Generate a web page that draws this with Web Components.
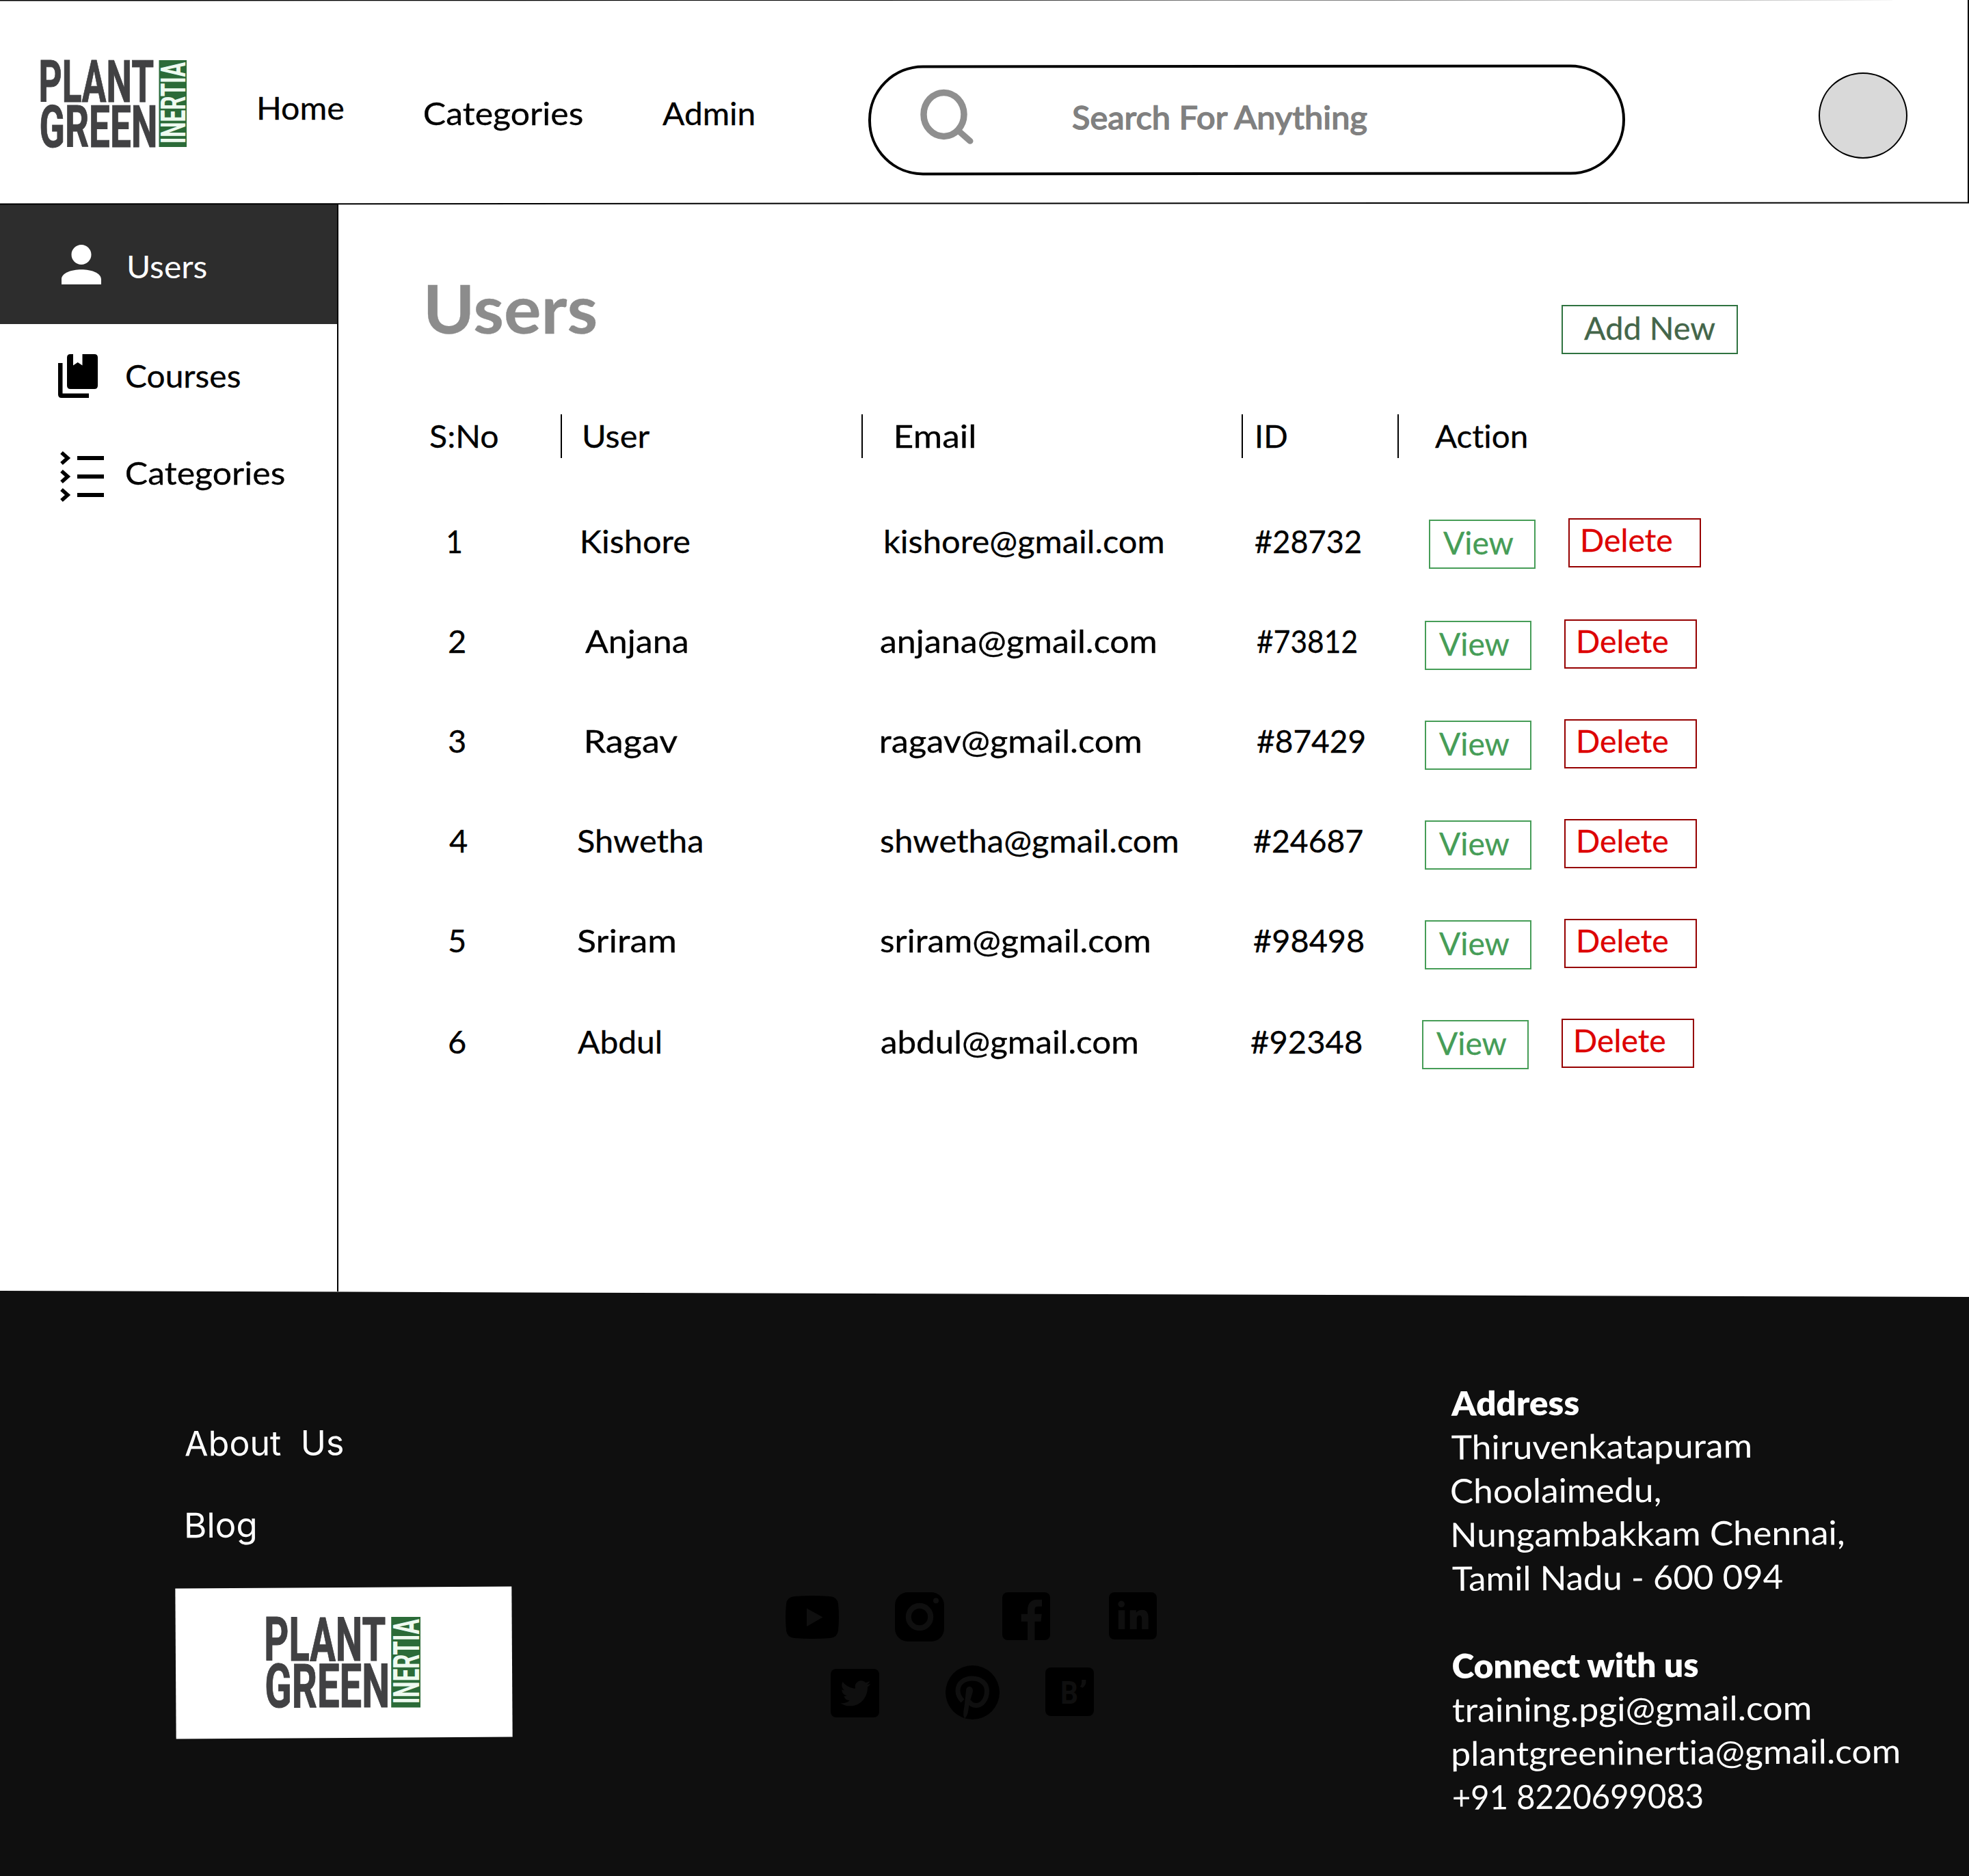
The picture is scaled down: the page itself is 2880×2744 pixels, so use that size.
<!DOCTYPE html>
<html lang="en">
<head>
<meta charset="utf-8">
<title>Plant Green Inertia – Users</title>
<style>
  html, body { margin: 0; padding: 0; background: #fff; }
  body { width: 2880px; height: 2744px; overflow: hidden; font-family: Lato, "Open Sans", sans-serif; color: #000; }
</style>
</head>
<body>
<admin-page></admin-page>
<script>
const define = (name, html, setup) => {
  const tpl = document.createElement('template');
  tpl.innerHTML = html;
  customElements.define(name, class extends HTMLElement {
    connectedCallback() {
      if (this.shadowRoot) return;
      const root = this.attachShadow({ mode: 'open' });
      root.append(tpl.content.cloneNode(true));
      if (setup) setup(this, root);
    }
  });
};

/* One line of text whose ink starts at the left edge of its box and spans the "w" attribute. */
const ctx = document.createElement('canvas').getContext('2d');
ctx.letterSpacing = '0.01px';
customElements.define('fit-text', class extends HTMLElement {
  connectedCallback() {
    if (this.shadowRoot) return;
    const root = this.attachShadow({ mode: 'open' });
    const size = +(this.getAttribute('size') || 47);
    const lh = +(this.getAttribute('lh') || 60);
    const weight = this.getAttribute('weight') || 400;
    const family = this.getAttribute('family') || 'Lato';
    const text = this.getAttribute('text');
    ctx.font = `${weight} ${size}px ${family}`;
    const m = ctx.measureText(text);
    const ink = m.actualBoundingBoxLeft + m.actualBoundingBoxRight;
    const w = +(this.getAttribute('w') || ink);
    root.innerHTML = `<style>
      :host { display: block; flex: none; width: ${w}px; height: ${lh}px; }
      span { display: inline-block; white-space: pre; font: ${weight} ${size}px/${lh}px ${family}, sans-serif;
        font-variant-ligatures: none; letter-spacing: 0.01px; -webkit-text-stroke: var(--bolden, 0.3px) currentColor;
        transform-origin: 0 0; transform: translate(-1px, 0.8px) scaleX(${w / ink}) translateX(${m.actualBoundingBoxLeft}px); }
    </style><span></span>`;
    root.querySelector('span').textContent = text;
  }
});

define('brand-logo', `
  <style>
    :host { display: block; flex: none; }
    svg { display: block; width: 100%; height: 100%; overflow: visible; }
    text { font-family: "Liberation Sans Narrow", Roboto, sans-serif; font-weight: 700; }
  </style>
  <svg viewBox="0 0 213 127" preserveAspectRatio="none">
    <g fill="#414143" stroke="#414143" stroke-width="1">
      <text x="-3.500" y="61" font-size="85" textLength="168.500" lengthAdjust="spacingAndGlyphs">PLANT</text>
      <text x="-2.500" y="126.500" font-size="85" textLength="173" lengthAdjust="spacingAndGlyphs">GREEN</text>
    </g>
    <rect x="172.500" y="0" width="40.500" height="127" fill="#2b6b38"/>
    <text transform="translate(211 122) rotate(-90)" font-size="50" textLength="119" lengthAdjust="spacingAndGlyphs" fill="#eefaf0">INERTIA</text>
  </svg>`);

define('search-box', `
  <style>
    :host { display: flex; box-sizing: border-box; flex: none; width: 1107px; height: 161px; border: 4px solid #000;
      border-radius: 80px; align-items: flex-start; color: #808080; transform: rotate(-0.05deg); }
    svg { flex: none; width: 80px; height: 84px; margin: 30px 0 0 72px; }
    fit-text { --bolden: 1.3px; margin: 41px 0 0 144px; }
  </style>
  <svg viewBox="0 0 80 84" fill="none" stroke="#8f8f8f" stroke-width="9.500">
    <ellipse cx="34.500" cy="38" rx="29.500" ry="32"/>
    <path d="M56 62L73 77" stroke-width="9" stroke-linecap="round"/>
  </svg>
  <fit-text text="Search For Anything" w="433" weight="500"></fit-text>`);

define('page-header', `
  <style>
    :host { display: flex; align-items: flex-start; position: relative; height: 299px; }
    .lines { position: absolute; left: 0; top: 0; width: 2880px; height: 300px; }
    brand-logo { width: 213px; height: 127px; margin: 88px 0 0 60px; }
    .home { margin: 126px 0 0 107px; }
    .cat { margin: 134px 0 0 119px; }
    .adm { margin: 134px 0 0 117px; }
    search-box { margin: 95px 0 0 166px; }
    .avatar { box-sizing: border-box; width: 130px; height: 126px; margin: 106px 0 0 283px; border: 2px solid #000; border-radius: 50%; background: #d9d9d9; }
  </style>
  <brand-logo></brand-logo>
  <fit-text class="home" text="Home" w="123"></fit-text>
  <fit-text class="cat" text="Categories" w="231"></fit-text>
  <fit-text class="adm" text="Admin" w="134"></fit-text>
  <search-box></search-box>
  <div class="avatar"></div>
  <svg class="lines" viewBox="0 0 2880 300" fill="none" stroke="#000" stroke-width="2">
    <path d="M0 .6L2880 -1.020M0 298.500L2880 296.500M2879 0V297"/>
  </svg>`);

define('side-nav', `
  <style>
    :host { display: flex; flex-direction: column; box-sizing: border-box; flex: none; width: 495px; border-right: 2px solid #000; }
    div { display: flex; align-items: flex-start; }
    .users { height: 175px; background: #2d2d2d; color: #fff; }
    svg { flex: none; overflow: visible; }
  </style>
  <div class="users">
    <svg style="margin:59px 0 0 90px" width="58" height="58" viewBox="4 4 16 16" fill="#fff"><path d="M12 12c2.210 0 4-1.790 4-4s-1.790-4-4-4-4 1.790-4 4 1.790 4 4 4zM4 18c0-2.660 4-4 8-4s8 1.340 8 4v2H4z"/></svg>
    <fit-text style="margin:59px 0 0 41px;--bolden:0px" text="Users" w="114"></fit-text>
  </div>
  <div style="height:152px">
    <svg style="margin:44px 0 0 85px" width="58" height="64" viewBox="0 0 58 64"><path d="M18 0H22V16.500L28.700 12L35.500 16.500V0H53Q58 0 58 5V46Q58 51 53 51H18Q13 51 13 46V5Q13 0 18 0Z"/><path d="M0 13H6.500V57.500H45V64H5Q0 64 0 59Z"/></svg>
    <fit-text style="margin:44px 0 0 43px" text="Courses" w="166"></fit-text>
  </div>
  <div>
    <svg style="margin:34px 0 0 88px" width="64" height="74" viewBox="0 0 64 74" fill="none" stroke="#000">
      <path stroke-width="5.500" d="M2 2L11 10L2 18M2 29L11 37L2 45M2 56L11 64L2 72"/>
      <path stroke-width="6" d="M25 10H64M25 37H64M25 64H64"/>
    </svg>
    <fit-text style="margin:34px 0 0 34px" text="Categories" w="231"></fit-text>
  </div>`);

define('outline-button', `
  <style>
    :host { display: block; box-sizing: border-box; flex: none; height: 72px; border: 2px solid var(--edge); color: var(--ink); }
  </style><slot></slot>`);

define('table-head', `
  <style>
    :host { display: grid; grid-template-columns: 190px 440px 556px 228px 1fr; height: 64px; }
    .split { box-sizing: border-box; border-left: 2px solid #000; }
  </style>
  <div><fit-text text="S:No" w="99"></fit-text></div>
  <div class="split" style="padding-left:33px"><fit-text text="User" w="96"></fit-text></div>
  <div class="split" style="padding-left:50px"><fit-text text="Email" w="114"></fit-text></div>
  <div class="split" style="padding-left:22px"><fit-text text="ID" w="43"></fit-text></div>
  <div class="split" style="padding-left:54px"><fit-text text="Action" w="134"></fit-text></div>`);

define('user-row', `
  <style>
    :host { display: grid; grid-template-columns: 191px 440px 556px 228px 1fr; }
    .c { padding-top: 2px; }
    .act { display: flex; align-items: flex-start; }
    .view { --edge: #469d57; --ink: #469d57; width: 156px; }
    .del { --edge: #960000; --ink: #dd0000; width: 194px; margin-left: 48px; }
    .view fit-text { margin: 0 0 0 20px; }
    .del fit-text { margin: -2px 0 0 20px; }
  </style>
  <div class="c"></div><div class="c"></div><div class="c"></div><div class="c"></div>
  <div class="act">
    <outline-button class="view"><fit-text text="View" w="103"></fit-text></outline-button>
    <outline-button class="del"><fit-text text="Delete" w="130"></fit-text></outline-button>
  </div>`, (host, root) => {
  const r = JSON.parse(host.getAttribute('row'));
  host.style.height = r.h + 'px';
  const starts = [630, 821, 1261, 1817];
  root.querySelectorAll('.c').forEach((cell, i) => {
    const [text, x, w] = r.cells[i];
    cell.style.paddingLeft = (x - starts[i]) + 'px';
    const t = document.createElement('fit-text');
    t.setAttribute('text', text);
    if (w) t.setAttribute('w', w);
    cell.append(t);
  });
  root.querySelector('.act').style.paddingLeft = (r.ax - 2045) + 'px';
  root.querySelector('.view').style.marginTop = (r.dy + 2) + 'px';
  root.querySelector('.del').style.marginTop = r.dy + 'px';
});

const USERS = [
  { h: 146, dy: 0, ax: 2090, cells: [['1', 656, 19], ['Kishore', 853, 156], ['kishore@gmail.com', 1296, 406], ['#28732', 1837, 154]] },
  { h: 146, dy: 2, ax: 2084, cells: [['2', 658], ['Anjana', 857, 149], ['anjana@gmail.com', 1289, 402], ['#73812', 1840, 145]] },
  { h: 146, dy: 2, ax: 2084, cells: [['3', 658], ['Ragav', 859, 133], ['ragav@gmail.com', 1290, 379], ['#87429', 1840, 157]] },
  { h: 146, dy: 2, ax: 2084, cells: [['4', 658], ['Shwetha', 846, 182], ['shwetha@gmail.com', 1289, 434], ['#24687', 1835, 159]] },
  { h: 148, dy: 2, ax: 2084, cells: [['5', 658], ['Sriram', 846, 142], ['sriram@gmail.com', 1289, 393], ['#98498', 1835, 160]] },
  { h: 146, dy: 0, ax: 2080, cells: [['6', 658], ['Abdul', 846, 121], ['abdul@gmail.com', 1290, 374], ['#92348', 1831, 161]] }
];

define('users-panel', `
  <style>
    :host { display: flex; flex-direction: column; flex: 1; padding-left: 135px; }
    .top { display: flex; align-items: flex-start; height: 307px; }
    .title { margin: 90px 0 0 -3.500px; color: #8c8c8c; }
    .add { --edge: #2f7340; --ink: #44664a; width: 258px; margin: 147px 0 0 1412.500px; }
    .add fit-text { margin: 0 0 0 32px; }
    .rows { margin-top: 88px; }
  </style>
  <div class="top">
    <fit-text class="title" text="Users" w="245" size="98" lh="120" weight="700"></fit-text>
    <outline-button class="add"><fit-text text="Add New" w="192"></fit-text></outline-button>
  </div>
  <table-head></table-head>
  <div class="rows"></div>`, (host, root) => {
  const rows = root.querySelector('.rows');
  for (const u of USERS) {
    const r = document.createElement('user-row');
    r.setAttribute('row', JSON.stringify(u));
    rows.append(r);
  }
});

define('social-links', `
  <style>
    :host { display: block; flex: none; width: 543px; }
    div { display: flex; align-items: flex-start; }
    svg { flex: none; display: block; fill: #000; }
    .cut { fill: #0f0f0f; }
    text { font: 700 47px "Liberation Sans Narrow", Roboto, sans-serif; }
  </style>
  <div style="height:107px">
    <svg style="margin-top:5px" width="78" height="63" viewBox="0 0 78 63"><path d="M13 1Q39 -1 65 1Q76 2 77 12Q79 31 77 51Q76 61 65 62Q39 64 13 62Q2 61 1 51Q-1 31 1 12Q2 2 13 1Z"/><path class="cut" d="M31 18.500L54.500 31.500L31 45Z"/></svg>
    <svg style="margin-left:82px" width="72" height="72" viewBox="0 0 72 72"><rect width="72" height="72" rx="19"/><circle cx="36" cy="36" r="16.200" fill="none" stroke="#0f0f0f" stroke-width="8"/><circle class="cut" cx="60" cy="12.300" r="4"/></svg>
    <svg style="margin-left:85px" width="70" height="70" viewBox="0 0 70 70"><rect width="70" height="70" rx="8"/><path class="cut" d="M37 70V42.700H27.700V31.700H37V26C37 16 43 10.700 50 10.700H58V20.700H52C49 20.700 47.500 22 47.500 25V31.700H57.700L56.500 42.700H47.500V70Z"/></svg>
    <svg style="margin-left:86px" width="70" height="69" viewBox="0 0 70 69"><rect width="70" height="69" rx="8"/><circle class="cut" cx="18.200" cy="17.300" r="4.800"/><path class="cut" d="M13.800 26.300H23.300V54H13.800ZM30.800 54V26.300H39.800V30C42 27 45 25.700 48.500 25.700C55 25.700 57.700 30 57.700 37V54H48.200V39C48.200 35.500 47 33.800 44.500 33.800C42 33.800 40.700 35.800 40.700 39V54Z"/></svg>
  </div>
  <div>
    <svg style="margin:5px 0 0 66px" width="71" height="71" viewBox="0 0 71 71"><rect width="71" height="71" rx="8"/><path class="cut" transform="translate(14.500 13) scale(1.830 1.900)" d="M23.953 4.570a10 10 0 01-2.825.775 4.958 4.958 0 002.163-2.723c-.951.555-2.005.959-3.127 1.184a4.920 4.920 0 00-8.384 4.482C7.690 8.095 4.067 6.130 1.640 3.162a4.822 4.822 0 00-.666 2.475c0 1.710.870 3.213 2.188 4.096a4.904 4.904 0 01-2.228-.616v.060a4.923 4.923 0 003.946 4.827 4.996 4.996 0 01-2.212.085 4.936 4.936 0 004.604 3.417 9.867 9.867 0 01-6.102 2.105c-.390 0-.779-.023-1.170-.067a13.995 13.995 0 007.557 2.209c9.053 0 13.998-7.496 13.998-13.985 0-.210 0-.420-.015-.630A9.935 9.935 0 0024 4.590z"/></svg>
    <svg style="margin-left:97px" width="79" height="79" viewBox="0 0 79 79"><circle cx="39.500" cy="39.500" r="39.500"/><path fill="none" stroke="#0f0f0f" stroke-width="7" d="M25 52C19 46 18 42 18 37C18 26 27 19 39 19C52 19 60.500 27 60.500 37C60.500 50 53 58.500 45 58.500C40 58.500 36 56 34 52"/><path class="cut" d="M30 37C30 29 40 29 40 37C40 40 35 52 33.500 64C33 70 31 75 28 77.500C25 73 26.500 66 27.500 60Z"/></svg>
    <svg style="margin:3px 0 0 67px" width="71" height="71" viewBox="0 0 71 71"><rect width="71" height="71" rx="8"/><text class="cut" x="22" y="53.300" textLength="26" lengthAdjust="spacingAndGlyphs">B</text><text class="cut" x="49" y="53.300" textLength="13" lengthAdjust="spacingAndGlyphs">’</text></svg>
  </div>`);

define('contact-block', `
  <style>
    :host { display: flex; flex-direction: column; align-items: flex-start; flex: none; transform: rotate(-0.35deg); transform-origin: 0 0; }
    .gap { height: 64px; }
  </style>`, (host, root) => {
  const lines = [['Address', 187, 800], ['Thiruvenkatapuram', 438], ['Choolaimedu,', 305], ['Nungambakkam Chennai,', 571],
    ['Tamil Nadu - 600 094', 484], null, ['Connect with us', 360, 800], ['training.pgi@gmail.com', 523],
    ['plantgreeninertia@gmail.com', 652.5], ['+91 8220699083', 364]];
  for (const l of lines) {
    const e = document.createElement(l ? 'fit-text' : 'div');
    if (l) {
      e.setAttribute('text', l[0]); e.setAttribute('w', l[1]);
      e.setAttribute('size', 49); e.setAttribute('lh', 64); e.setAttribute('weight', l[2] || 400);
      if (l[0][0] === 'N') e.style.marginLeft = '1.5px';
    } else e.className = 'gap';
    root.append(e);
  }
});

define('page-footer', `
  <style>
    :host { display: flex; align-items: flex-start; height: 855px; background: #0f0f0f; color: #fff; --bolden: 0px;
      clip-path: polygon(0 0, 100% 9px, 100% 100%, 0 100%); }
    .left { flex: none; width: 494px; margin: 192px 0 0 257px; }
    .left fit-text { transform: rotate(-0.35deg); margin-left: 14.500px; }
    .left .blog { margin: 60px 0 0 16.500px; }
    .card { display: flex; box-sizing: border-box; width: 492px; height: 220px; margin-top: 62px; background: #fff; padding: 43px 0 0 133px; transform: rotate(-0.35deg); }
    brand-logo { width: 225px; height: 132.500px; transform: rotate(0.35deg); }
    social-links { margin: 441px 0 0 398px; }
    contact-block { margin: 131px 0 0 430.500px; }
  </style>
  <div class="left">
    <fit-text text="About  Us" w="230" size="50" family="Inter"></fit-text>
    <fit-text class="blog" text="Blog" w="100" size="50" family="Inter"></fit-text>
    <div class="card"><brand-logo></brand-logo></div>
  </div>
  <social-links></social-links>
  <contact-block></contact-block>`);

define('admin-page', `
  <style>
    :host { display: block; width: 2880px; height: 2744px; }
    .mid { display: flex; height: 1590px; }
    page-footer { margin-top: -1px; height: 856px; }
  </style>
  <page-header></page-header>
  <div class="mid"><side-nav></side-nav><users-panel></users-panel></div>
  <page-footer></page-footer>`);
</script>
</body>
</html>
